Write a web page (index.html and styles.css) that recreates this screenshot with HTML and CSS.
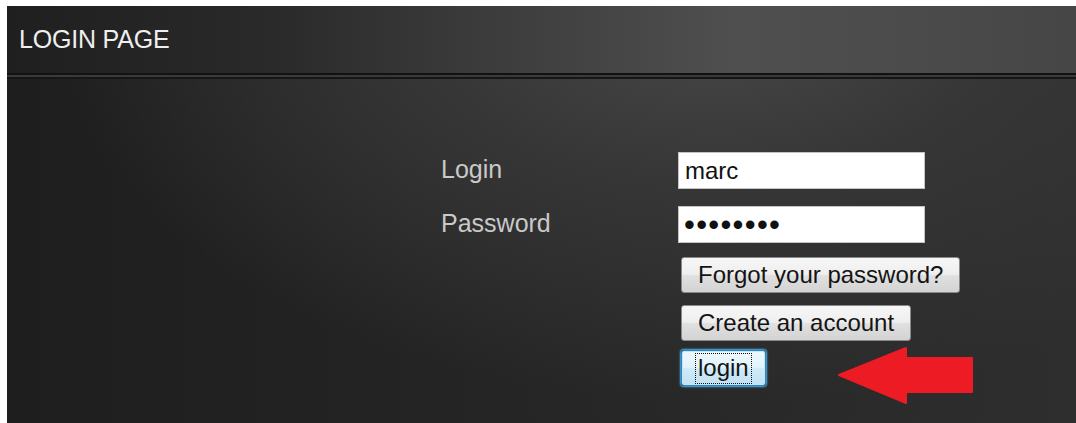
FILE: index.html
```html
<!DOCTYPE html>
<html lang="en">
<head>
<meta charset="utf-8">
<title>Login page</title>
<link rel="stylesheet" href="styles.css">
</head>
<body>
<div class="page">
  <header class="topbar">
    <h1 class="title">LOGIN PAGE</h1>
  </header>
  <main class="content">
    <form class="login-form">
      <div class="row row-login">
        <label class="field-label" for="login">Login</label>
        <input class="field" id="login" type="text" value="marc">
      </div>
      <div class="row row-password">
        <label class="field-label" for="password">Password</label>
        <input class="field field-secret" id="password" type="password" value="secret12">
      </div>
      <div class="row row-forgot">
        <span class="spacer"></span>
        <button class="btn" type="button">Forgot your password?</button>
      </div>
      <div class="row row-create">
        <span class="spacer"></span>
        <button class="btn" type="button">Create an account</button>
      </div>
      <div class="row row-submit">
        <span class="spacer"></span>
        <button class="btn btn-focused" type="submit"><span class="focus-ring">login</span></button>
        <svg class="pointer" width="136" height="58" viewBox="0 0 136 58" aria-hidden="true">
          <polygon points="1,28 68,1 68,11 134,11 134,45 68,45 68,56" fill="#ed1c24" stroke="#ed1c24" stroke-width="2" stroke-linejoin="round"/>
        </svg>
      </div>
    </form>
  </main>
</div>
</body>
</html>
```

FILE: styles.css
```css
html, body {
  height: 100%;
}

body {
  margin: 0;
  padding: 6px 0 0 7px;
  box-sizing: border-box;
  background: #ffffff;
  font-family: "Liberation Sans", Arial, sans-serif;
  overflow: hidden;
}

.page {
  height: 100%;
  display: flex;
  flex-direction: column;
  background:
    radial-gradient(ellipse 62% 95% at 66% 0%, #494949 0%, #363636 45%, rgba(31,31,31,0) 100%),
    linear-gradient(90deg, #1e1e1e 0%, #242424 40%, #2e2e2e 100%);
}

.topbar {
  height: 67px;
  display: flex;
  align-items: center;
  padding-left: 12px;
  background: linear-gradient(90deg, #1f1f1f 0%, #2a2a2a 25%, #3c3c3c 45%, #4f4f4f 68%, #4b4b4b 85%, #464646 100%);
  border-bottom: 2px solid #121212;
  box-shadow: 0 2px 0 #3a3a3a, 0 4px 0 #161616;
  margin-bottom: 4px;
}

.title {
  margin: 0;
  font-size: 25px;
  font-weight: normal;
  color: #efefef;
  letter-spacing: -0.2px;
}

.content {
  flex: 1;
  padding-top: 73px;
}

.login-form {
  margin-left: 434px;
  display: flex;
  flex-direction: column;
}

.row {
  display: flex;
  align-items: center;
}

.row-login { margin-bottom: 17px; }
.row-password { margin-bottom: 14px; }
.row-forgot { margin-bottom: 12px; }
.row-create { margin-bottom: 9px; }
.row-submit { align-items: flex-start; }

.field-label,
.spacer {
  width: 237px;
  flex: none;
}

.field-label {
  font-size: 25px;
  color: #c9c9c9;
  margin-top: -2px;
}

.field {
  width: 247px;
  height: 37px;
  box-sizing: border-box;
  margin: 0;
  padding: 0 6px;
  border: 1px solid #c4c4c4;
  background: #ffffff;
  font-family: "Liberation Sans", Arial, sans-serif;
  font-size: 24px;
  color: #111111;
  outline: none;
}

.field-secret {
  font-size: 31px;
  letter-spacing: 1.3px;
  padding-left: 5px;
}

.btn {
  height: 36px;
  margin: 0 0 0 3px;
  padding: 0 16px;
  border: 1px solid #8a8a8a;
  border-radius: 3px;
  background: linear-gradient(180deg, #f7f7f7 0%, #eeeeee 48%, #e0e0e0 52%, #d3d3d3 100%);
  font-family: "Liberation Sans", Arial, sans-serif;
  font-size: 24px;
  color: #141414;
  line-height: 1;
  cursor: pointer;
}

.btn-focused {
  padding: 0 13px;
  border-color: #2f86c0;
  box-shadow: 0 0 2px 1px #4fb6ea, inset 0 0 0 1px #bfe6f9;
  background: linear-gradient(180deg, #eef8fd 0%, #e2f3fc 48%, #cfeaf8 52%, #bfe2f4 100%);
}

.focus-ring {
  display: inline-block;
  padding: 2px 2px 3px;
  border: 1px dotted #111111;
}

.pointer {
  display: block;
  flex: none;
  margin-left: 72px;
  margin-top: -3px;
}
```
